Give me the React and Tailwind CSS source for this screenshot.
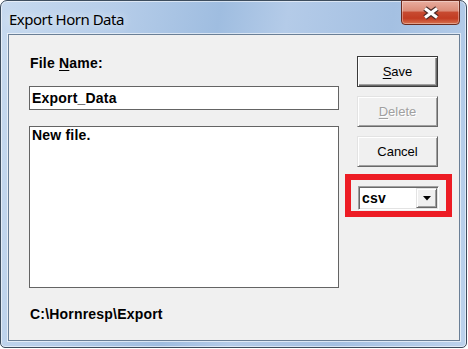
export default function App() {
  const raised =
    "border border-t-[#e3e3e3] border-l-[#e3e3e3] border-r-[#696969] border-b-[#696969] shadow-[inset_1px_1px_0_#ffffff,inset_-1px_-1px_0_#a0a0a0]";

  return (
    <div className="w-[468px] h-[349px] bg-white">
      <div className="relative w-[467px] h-[348px] flex flex-col rounded-t-[7px] rounded-b-[5px] border border-[#3d4d5e] bg-[linear-gradient(100deg,#c7daef_0%,#b6cde9_22%,#9fbde0_42%,#b4cbe8_55%,#a4c0e2_75%,#bcd2ec_100%)] shadow-[inset_0_0_0_1px_rgba(255,255,255,0.55)]">
        {/* title bar */}
        <div className="h-[33px] shrink-0 pl-[8px] pt-[6px]">
          <span className="text-[15px] leading-[20px] text-black tracking-[-0.5px] [text-shadow:0_0_8px_rgba(255,255,255,0.9)] font-['Noto_Sans',sans-serif]">
            Export Horn Data
          </span>
        </div>

        <button className="absolute top-[-1px] right-[6px] w-[59px] h-[25px] rounded-b-[4px] border border-[#6b2b1e] bg-[linear-gradient(to_bottom,#e8ad9f_0%,#dc8d79_42%,#c74a30_50%,#c23c22_75%,#d7714f_100%)] shadow-[inset_0_0_0_1px_rgba(255,255,255,0.35)] flex items-center justify-center">
          <svg width="18" height="14" viewBox="0 0 18 14">
            <path d="M3 2.5 L15 11.5 M15 2.5 L3 11.5" stroke="#4a2a26" strokeWidth="5.5" fill="none" />
            <path d="M3 2.5 L15 11.5 M15 2.5 L3 11.5" stroke="#ffffff" strokeWidth="3.2" fill="none" />
          </svg>
        </button>

        {/* client area */}
        <div className="ml-[7px] mr-[6px] mb-[6px] flex-1 border border-[#6a7f96] bg-[#f0f0f0] shadow-[0_0_0_1px_rgba(255,255,255,0.6)] flex font-['Liberation_Sans',Arial,sans-serif]">
          {/* left column */}
          <div className="ml-[20px] w-[310px] flex flex-col">
            <div className="pt-[20px] pl-[1px] text-[14px] leading-[16px] font-bold tracking-[0.2px] text-black">
              File <span className="underline underline-offset-[2px]">N</span>ame:
            </div>
            <div className="mt-[15px] h-[24px] border border-[#646464] bg-white flex items-center pl-[2px] text-[14px] leading-[16px] font-bold tracking-[0.2px] text-black">
              Export_Data
            </div>
            <div className="mt-[16px] h-[162px] border border-[#646464] bg-white pl-[2px] text-[14px] leading-[16px] font-bold tracking-[0.2px] text-black">
              New file.
            </div>
            <div className="mt-[18px] pl-[1px] text-[14px] leading-[16px] font-bold tracking-[0.2px] text-black">
              C:\Hornresp\Export
            </div>
          </div>

          {/* right column */}
          <div className="ml-[6px] w-[107px] flex flex-col">
            <div className="pt-[21px] pl-[12px] flex flex-col gap-[9px]">
              <button className="w-[81px] h-[31px] border border-[#3a3a3a] bg-[#f0f0f0] shadow-[inset_1px_1px_0_#ffffff,inset_-1px_-1px_0_#696969,inset_-2px_-2px_0_#a0a0a0] text-[13px] text-black">
                <span className="underline underline-offset-[2px]">S</span>ave
              </button>
              <button className={`w-[81px] h-[31px] bg-[#f0f0f0] ${raised} text-[13px] text-[#a0a0a0] [text-shadow:1px_1px_0_#ffffff]`}>
                <span className="underline underline-offset-[2px]">D</span>elete
              </button>
              <button className={`w-[81px] h-[31px] bg-[#f0f0f0] ${raised} text-[13px] text-black`}>
                Cancel
              </button>
            </div>

            <div className="mt-[7px] w-[107px] border-[6px] border-[#ed1c24] pt-[6px] pl-[7px] pb-[1px]">
              <div className="w-[81px] h-[24px] border border-t-[#a0a0a0] border-l-[#a0a0a0] border-r-white border-b-white shadow-[inset_1px_1px_0_#696969,inset_-1px_-1px_0_#e3e3e3] bg-white flex items-center">
                <span className="flex-1 pl-[3px] text-[14px] leading-[16px] font-bold tracking-[0.2px] text-black">csv</span>
                <div className={`w-[21px] h-[20px] mr-[1px] bg-[#f0f0f0] ${raised} flex items-center justify-center`}>
                  <svg width="8" height="5" viewBox="0 0 8 5">
                    <path d="M0 0 H8 L4 4.5 Z" fill="#000000" />
                  </svg>
                </div>
              </div>
            </div>
          </div>
        </div>
      </div>
    </div>
  );
}
